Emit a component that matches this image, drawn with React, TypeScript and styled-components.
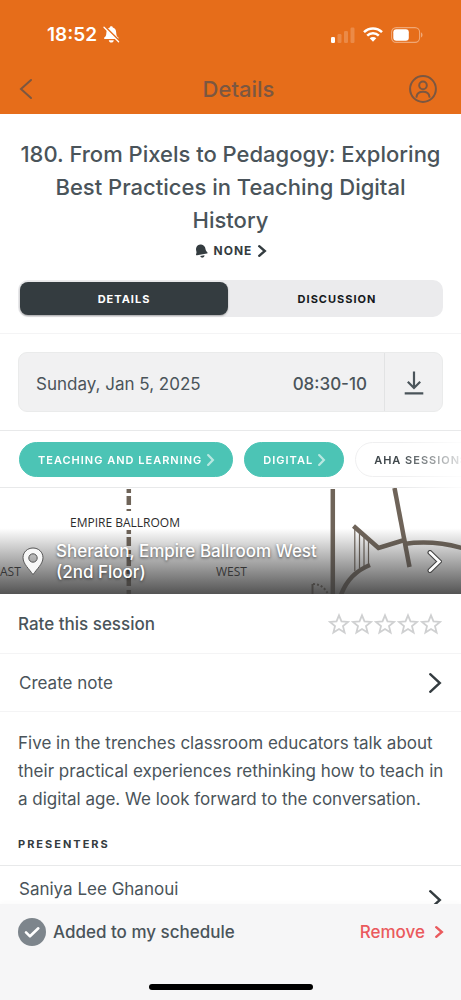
import React from "react";
import styled, { createGlobalStyle, css } from "styled-components";

const GlobalStyle = createGlobalStyle`
  *, *::before, *::after { box-sizing: border-box; }
  body { margin: 0; background: #ffffff; }
  button { font: inherit; color: inherit; border: 0; background: none; padding: 0; margin: 0; cursor: pointer; }
  svg { display: block; flex: none; }
`;

const ink = "#4a545a";
const dark = "#343c40";
const line = "#e8e9ea";
const faint = "#f4f4f5";
const teal = "#4cc4b5";
const orange = "#e66d1a";

const Screen = styled.div`
  display: flex;
  flex-direction: column;
  height: 100vh;
  overflow: hidden;
  background: #ffffff;
  color: ${ink};
  font-family: Inter, "Liberation Sans", sans-serif;
  font-size: 17px;
  line-height: 20px;
`;

const TopBar = styled.header`
  flex: none;
  background: ${orange};
`;

const StatusBar = styled.div`
  display: flex;
  align-items: center;
  justify-content: space-between;
  height: 64px;
  padding: 5px 38px 0 47px;
  color: #ffffff;
  font-size: 19px;
  font-weight: 600;
`;

const StatusGroup = styled.div<{ $gap: number }>`
  display: flex;
  align-items: center;
  gap: ${(p) => p.$gap}px;
`;

const NavBar = styled.nav`
  display: grid;
  grid-template-columns: 48px 1fr 32px;
  align-items: center;
  height: 50px;
  padding: 0 20px;
  color: #7b5741;
`;

const NavTitle = styled.span`
  text-align: center;
  font-size: 22px;
  font-weight: 500;
  line-height: 28px;
`;

const NavButton = styled.button`
  display: flex;
  align-items: center;
  height: 32px;
`;

const Content = styled.main`
  flex: 1;
  min-height: 0;
  overflow-y: auto;
  scrollbar-width: none;
`;

const Hero = styled.section`
  display: flex;
  flex-direction: column;
  align-items: center;
  padding: 24px 18px 16px;
  border-bottom: 1px solid ${faint};
`;

const Title = styled.h1`
  margin: 0;
  font-size: 22px;
  font-weight: 500;
  line-height: 33px;
  text-align: center;
`;

const ReminderButton = styled.button`
  display: flex;
  align-items: center;
  gap: 6px;
  margin: 4px 0 19px;
  color: ${dark};
  font-size: 12px;
  font-weight: 700;
  letter-spacing: 1px;
`;

const Segments = styled.div`
  display: flex;
  align-self: stretch;
  gap: 5px;
  height: 37px;
  padding: 2px;
  border-radius: 10px;
  background: #ebebed;
`;

const Segment = styled.button<{ $active?: boolean }>`
  flex: 1;
  border-radius: 8px;
  color: #15191c;
  font-size: 11px;
  font-weight: 700;
  letter-spacing: 1px;
  ${(p) =>
    p.$active &&
    css`
      background: ${dark};
      color: #ffffff;
      box-shadow: 0 1px 2px rgba(0, 0, 0, 0.3);
    `}
`;

const DateSection = styled.section`
  padding: 18px;
  border-bottom: 1px solid ${line};
`;

const DateCard = styled.div`
  display: flex;
  align-items: stretch;
  height: 60px;
  border: 1px solid #eaebeb;
  border-radius: 9px;
  background: #f1f1f2;
`;

const DateInfo = styled.div`
  display: flex;
  flex: 1;
  align-items: center;
  justify-content: space-between;
  padding: 4px 17px 0;
  border-right: 1px solid #e2e3e4;
`;

const Time = styled.time`
  font-weight: 500;
`;

const DownloadButton = styled.button`
  display: flex;
  align-items: center;
  justify-content: center;
  width: 57px;
  padding-top: 2px;
`;

const Tags = styled.nav`
  display: flex;
  gap: 11px;
  padding: 11px 0 10px 19px;
  overflow: hidden;
  border-bottom: 1px solid ${line};
  mask-image: linear-gradient(to right, #000 calc(100% - 60px), rgba(0, 0, 0, 0.15));
`;

const Tag = styled.a<{ $plain?: boolean }>`
  display: flex;
  flex: none;
  align-items: center;
  gap: 5px;
  height: 35px;
  padding: 0 18px;
  border: 1px solid ${(p) => (p.$plain ? "#efeff0" : teal)};
  border-radius: 18px;
  background: ${(p) => (p.$plain ? "#ffffff" : teal)};
  color: ${(p) => (p.$plain ? "#3f474b" : "#ffffff")};
  font-size: 11px;
  font-weight: 600;
  letter-spacing: 1px;
  text-decoration: none;
  white-space: nowrap;
`;

const Venue = styled.a`
  display: grid;
  height: 106px;
  color: #ffffff;
  text-decoration: none;
  overflow: hidden;
  > * {
    grid-area: 1 / 1;
  }
`;

const FloorPlan = styled.svg`
  width: 100%;
  height: 106px;
`;

const VenueLabel = styled.div`
  display: flex;
  align-items: center;
  gap: 12px;
  padding: 41px 19px 0 22px;
  background: linear-gradient(to bottom, rgba(60, 60, 60, 0) 38%, rgba(60, 60, 60, 0.88));
  font-weight: 500;
  line-height: 21px;
  text-shadow: 0 1px 3px rgba(0, 0, 0, 0.6);
`;

const VenueName = styled.span`
  max-width: 280px;
  margin-right: auto;
`;

const Row = styled.div`
  display: flex;
  align-items: center;
  justify-content: space-between;
  height: 60px;
  padding: 0 19px 0 18px;
  border-bottom: 1px solid ${faint};
  font-weight: 500;
`;

const RowButton = styled.button`
  display: flex;
  align-items: center;
  justify-content: space-between;
  width: 100%;
  height: 58px;
  padding: 0 20px 0 19px;
  border-bottom: 1px solid ${faint};
  text-align: left;
`;

const Stars = styled.div`
  display: flex;
  gap: 1px;
`;

const Star = styled.button`
  color: #cfd0d1;
`;

const Description = styled.p`
  margin: 0;
  padding: 17px 15px 21px 18px;
  line-height: 28px;
`;

const SectionTitle = styled.h2`
  margin: 0;
  padding: 0 18px 11px;
  border-bottom: 1px solid ${line};
  color: ${dark};
  font-size: 11px;
  font-weight: 700;
  letter-spacing: 2px;
  line-height: 20px;
`;

const Presenter = styled.a`
  display: flex;
  justify-content: space-between;
  height: 64px;
  padding: 13px 20px 0 19px;
  color: ${ink};
  text-decoration: none;
  svg {
    margin-top: 11px;
  }
`;

const Footer = styled.footer`
  flex: none;
  display: flex;
  flex-direction: column;
  align-items: center;
  justify-content: space-between;
  height: 96px;
  padding: 14px 18px 10px;
  background: #f6f6f7;
  box-shadow: 0 -2px 4px rgba(0, 0, 0, 0.02);
  font-weight: 500;
`;

const FooterRow = styled.div`
  display: flex;
  align-items: center;
  justify-content: space-between;
  width: 100%;
`;

const Added = styled.span`
  display: flex;
  align-items: center;
  gap: 7px;
`;

const RemoveButton = styled.button`
  display: flex;
  align-items: center;
  gap: 10px;
  color: #ea5a5d;
`;

const HomeIndicator = styled.div`
  width: 164px;
  height: 6px;
  border-radius: 3px;
  background: #000000;
`;

type ChevronProps = { w: number; h: number; stroke: number; color?: string; left?: boolean };

function Chevron({ w, h, stroke, color = "currentColor", left = false }: ChevronProps) {
  const p = stroke / 2;
  const points = left ? `${w - p},${p} ${p},${h / 2} ${w - p},${h - p}` : `${p},${p} ${w - p},${h / 2} ${p},${h - p}`;
  return (
    <svg width={w} height={h} viewBox={`0 0 ${w} ${h}`} overflow="visible" aria-hidden="true">
      <polyline points={points} fill="none" stroke={color} strokeWidth={stroke} strokeLinecap="round" strokeLinejoin="miter" />
    </svg>
  );
}

const BellOff = () => (
  <svg width="17" height="17" viewBox="0 0 17 17" aria-label="Silent mode">
    <path d="M8.3 0.3c.9 0 1.4.5 1.5 1.2 2.3.7 3.3 2.6 3.4 4.9.1 2.9.6 3.8 2.1 5.2.6.6.3 1.5-.6 1.5H1.9c-.9 0-1.2-.9-.6-1.5 1.5-1.4 2-2.3 2.1-5.2.1-2.3 1.1-4.2 3.4-4.9.1-.7.6-1.2 1.5-1.2z" fill="#fff" />
    <path d="M5.8 14.3h5c-.2 1.4-1.200 2.3-2.500 2.300s-2.300-.9-2.500-2.300z" fill="#fff" />
    <path d="M1.900.8l14.400 14.200" stroke={orange} strokeWidth="2.200" />
    <path d="M1 1.300l14.600 14.400" stroke="#fff" strokeWidth="1.300" strokeLinecap="round" />
  </svg>
);

const Signal = () => (
  <svg width="24" height="16" viewBox="0 0 24 16" fill="#fff" aria-label="Signal">
    <rect x="0" y="10" width="4" height="6" rx="1.2" />
    <rect x="6.5" y="7" width="4" height="9" rx="1.2" opacity=".2" />
    <rect x="13" y="4" width="4" height="12" rx="1.2" opacity=".2" />
    <rect x="19.5" y="0.5" width="4" height="15.5" rx="1.2" opacity=".2" />
  </svg>
);

const Wifi = () => (
  <svg width="20" height="15" viewBox="0 0 20 15" aria-label="Wi-Fi">
    <g fill="none" stroke="#fff" strokeWidth="2.5">
      <path d="M1 5.100a12.800 12.800 0 0 1 18 0" />
      <path d="M4.200 8.600a8.300 8.300 0 0 1 11.600 0" />
    </g>
    <path d="M10 14.700l-3.300-3.400a4.700 4.700 0 0 1 6.600 0z" fill="#fff" />
  </svg>
);

const Battery = () => (
  <svg width="32" height="16" viewBox="0 0 32 16" aria-label="Battery">
    <rect x=".6" y=".6" width="28" height="14.8" rx="4.6" fill="none" stroke="#fff" strokeOpacity=".4" strokeWidth="1.1" />
    <rect x="2.3" y="2.3" width="15.5" height="11.4" rx="3" fill="#fff" />
    <path d="M30.2 5.600c1.600.6 1.600 4.200 0 4.800z" fill="#fff" fillOpacity=".5" />
  </svg>
);

const Person = () => (
  <svg width="28" height="28" viewBox="0 0 28 28" fill="none" stroke="currentColor" strokeWidth="2" aria-hidden="true">
    <circle cx="14" cy="14" r="12.9" />
    <circle cx="14" cy="10.4" r="3.8" />
    <path d="M7.500 21.800c.5-3.600 3.200-5 6.500-5s6 1.400 6.500 5" strokeLinecap="round" />
  </svg>
);

const Bell = () => (
  <svg width="13" height="14" viewBox="0 0 13 14" fill="currentColor" aria-hidden="true">
    <path d="M1.3 3.5C2 1.4 4 .2 6.2.5c2.3.3 4 2.1 4.3 4.4.2 1.5.8 2.4 1.8 3.3.5.5.3 1.3-.4 1.400L2.100 11.300c-.8.200-1.300-.6-1-1.300.5-1.200.5-2 .1-3.300C.9 5.600.9 4.500 1.300 3.500z" />
    <path d="M5.200 12.100l4.300-.8c0 1.200-.6 2.100-1.700 2.300-1.100.2-2.100-.4-2.600-1.500z" />
  </svg>
);

const Download = () => (
  <svg width="20" height="24" viewBox="0 0 20 24" fill="none" stroke="currentColor" strokeWidth="2.2" aria-hidden="true">
    <path d="M10 .5v16M3.800 10.800L10 17l6.200-6.200M.7 22.300h18.600" />
  </svg>
);

const StarIcon = () => (
  <svg width="22" height="22" viewBox="0 0 22 22" fill="none" stroke="currentColor" strokeWidth="1.8" aria-hidden="true">
    <path d="M11 2.300l2.500 6.100 6.500.5-5 4.200 1.600 6.400L11 16l-5.600 3.500L7 13.100 2 8.900l6.500-.5z" />
  </svg>
);

const Pin = () => (
  <svg width="22" height="29" viewBox="0 0 22 29" aria-hidden="true">
    <path
      d="M11 1C5.300 1 1 5.200 1 10.700c0 6.300 6.300 11.300 10 17 3.700-5.700 10-10.700 10-17C21 5.200 16.700 1 11 1zm0 5.800a4.200 4.200 0 1 1 0 8.400 4.200 4.200 0 0 1 0-8.400z"
      fill="#f7f7f7"
      stroke="#555"
      strokeWidth="1"
      fillRule="evenodd"
    />
  </svg>
);

const VenueChevron = () => (
  <svg width="15" height="23" viewBox="0 0 15 23" fill="none" aria-hidden="true">
    <path d="M3 2.500l9.300 9L3 20.500" stroke="#444" strokeWidth="5" strokeLinecap="round" />
    <path d="M3 2.500l9.300 9L3 20.500" stroke="#fff" strokeWidth="2.800" strokeLinecap="round" />
  </svg>
);

const CheckBadge = () => (
  <svg width="28" height="28" viewBox="0 0 28 28" aria-hidden="true">
    <circle cx="14" cy="14" r="14" fill="#7d858c" />
    <path d="M8 14.300l4 4 8.300-8" fill="none" stroke="#fff" strokeWidth="2.600" strokeLinecap="round" strokeLinejoin="round" />
  </svg>
);

const Plan = () => (
  <FloorPlan viewBox="0 0 461 106" preserveAspectRatio="xMidYMid slice" aria-hidden="true">
    <g fill="none" stroke="#6f6459" strokeWidth="4.5">
      <path d="M128.800 1v22" strokeDasharray="4 3 9 4" />
      <path d="M128.800 42v64" strokeDasharray="4 3 9 4" />
      <path d="M332.800 1v106" />
      <path d="M394.500 0l15 79" />
      <path d="M353.500 38l25 22 26-8M404 56c20-3 40-1 58 4" />
      <path d="M370 77c-15 6-24 16-29 30" />
      <path d="M354.800 41v42M359.500 44v36M364 48v31M368.500 50v28" strokeWidth="1.2" />
      <path d="M312.500 96v10" strokeWidth="2" />
      <path d="M313 96c7 0 12 4 15 10" strokeWidth="2" strokeDasharray="2 2" />
    </g>
    <g fill="#2b2b2b" fontFamily='"Open Sans", sans-serif' fontSize="12">
      <text x="70" y="39">EMPIRE BALLROOM</text>
      <text x="0" y="88">AST</text>
      <text x="216" y="88">WEST</text>
    </g>
  </FloorPlan>
);

const TAGS = [
  { label: "TEACHING AND LEARNING", plain: false },
  { label: "DIGITAL", plain: false },
  { label: "AHA SESSIONS", plain: true },
];

export default function App() {
  return (
    <Screen>
      <GlobalStyle />
      <TopBar>
        <StatusBar>
          <StatusGroup $gap={6}>
            <span>18:52</span>
            <BellOff />
          </StatusGroup>
          <StatusGroup $gap={8}>
            <Signal />
            <Wifi />
            <Battery />
          </StatusGroup>
        </StatusBar>
        <NavBar>
          <NavButton aria-label="Back">
            <Chevron w={12} h={20} stroke={2} left />
          </NavButton>
          <NavTitle>Details</NavTitle>
          <NavButton aria-label="Profile">
            <Person />
          </NavButton>
        </NavBar>
      </TopBar>

      <Content>
        <Hero>
          <Title>180. From Pixels to Pedagogy: Exploring Best Practices in Teaching Digital History</Title>
          <ReminderButton>
            <Bell />
            NONE
            <Chevron w={8} h={12} stroke={2.4} />
          </ReminderButton>
          <Segments>
            <Segment $active>DETAILS</Segment>
            <Segment>DISCUSSION</Segment>
          </Segments>
        </Hero>

        <DateSection>
          <DateCard>
            <DateInfo>
              <span>Sunday, Jan 5, 2025</span>
              <Time>08:30-10</Time>
            </DateInfo>
            <DownloadButton aria-label="Download">
              <Download />
            </DownloadButton>
          </DateCard>
        </DateSection>

        <Tags>
          {TAGS.map((tag) => (
            <Tag key={tag.label} href="#" $plain={tag.plain}>
              {tag.label}
              <Chevron w={7} h={12} stroke={2.2} color={tag.plain ? "#b9bcbe" : "#b8e8e1"} />
            </Tag>
          ))}
        </Tags>

        <Venue href="#">
          <Plan />
          <VenueLabel>
            <Pin />
            <VenueName>Sheraton, Empire Ballroom West (2nd Floor)</VenueName>
            <VenueChevron />
          </VenueLabel>
        </Venue>

        <Row>
          <span>Rate this session</span>
          <Stars>
            {[1, 2, 3, 4, 5].map((n) => (
              <Star key={n} aria-label={`${n} of 5`}>
                <StarIcon />
              </Star>
            ))}
          </Stars>
        </Row>
        <RowButton>
          Create note
          <Chevron w={12} h={20} stroke={2.4} color={dark} />
        </RowButton>

        <Description>
          Five in the trenches classroom educators talk about their practical experiences rethinking how to teach in a
          digital age. We look forward to the conversation.
        </Description>

        <SectionTitle>PRESENTERS</SectionTitle>
        <Presenter href="#">
          Saniya Lee Ghanoui
          <Chevron w={12} h={20} stroke={2.4} color={dark} />
        </Presenter>
      </Content>

      <Footer>
        <FooterRow>
          <Added>
            <CheckBadge />
            Added to my schedule
          </Added>
          <RemoveButton>
            Remove
            <Chevron w={8} h={12} stroke={2.4} />
          </RemoveButton>
        </FooterRow>
        <HomeIndicator />
      </Footer>
    </Screen>
  );
}
